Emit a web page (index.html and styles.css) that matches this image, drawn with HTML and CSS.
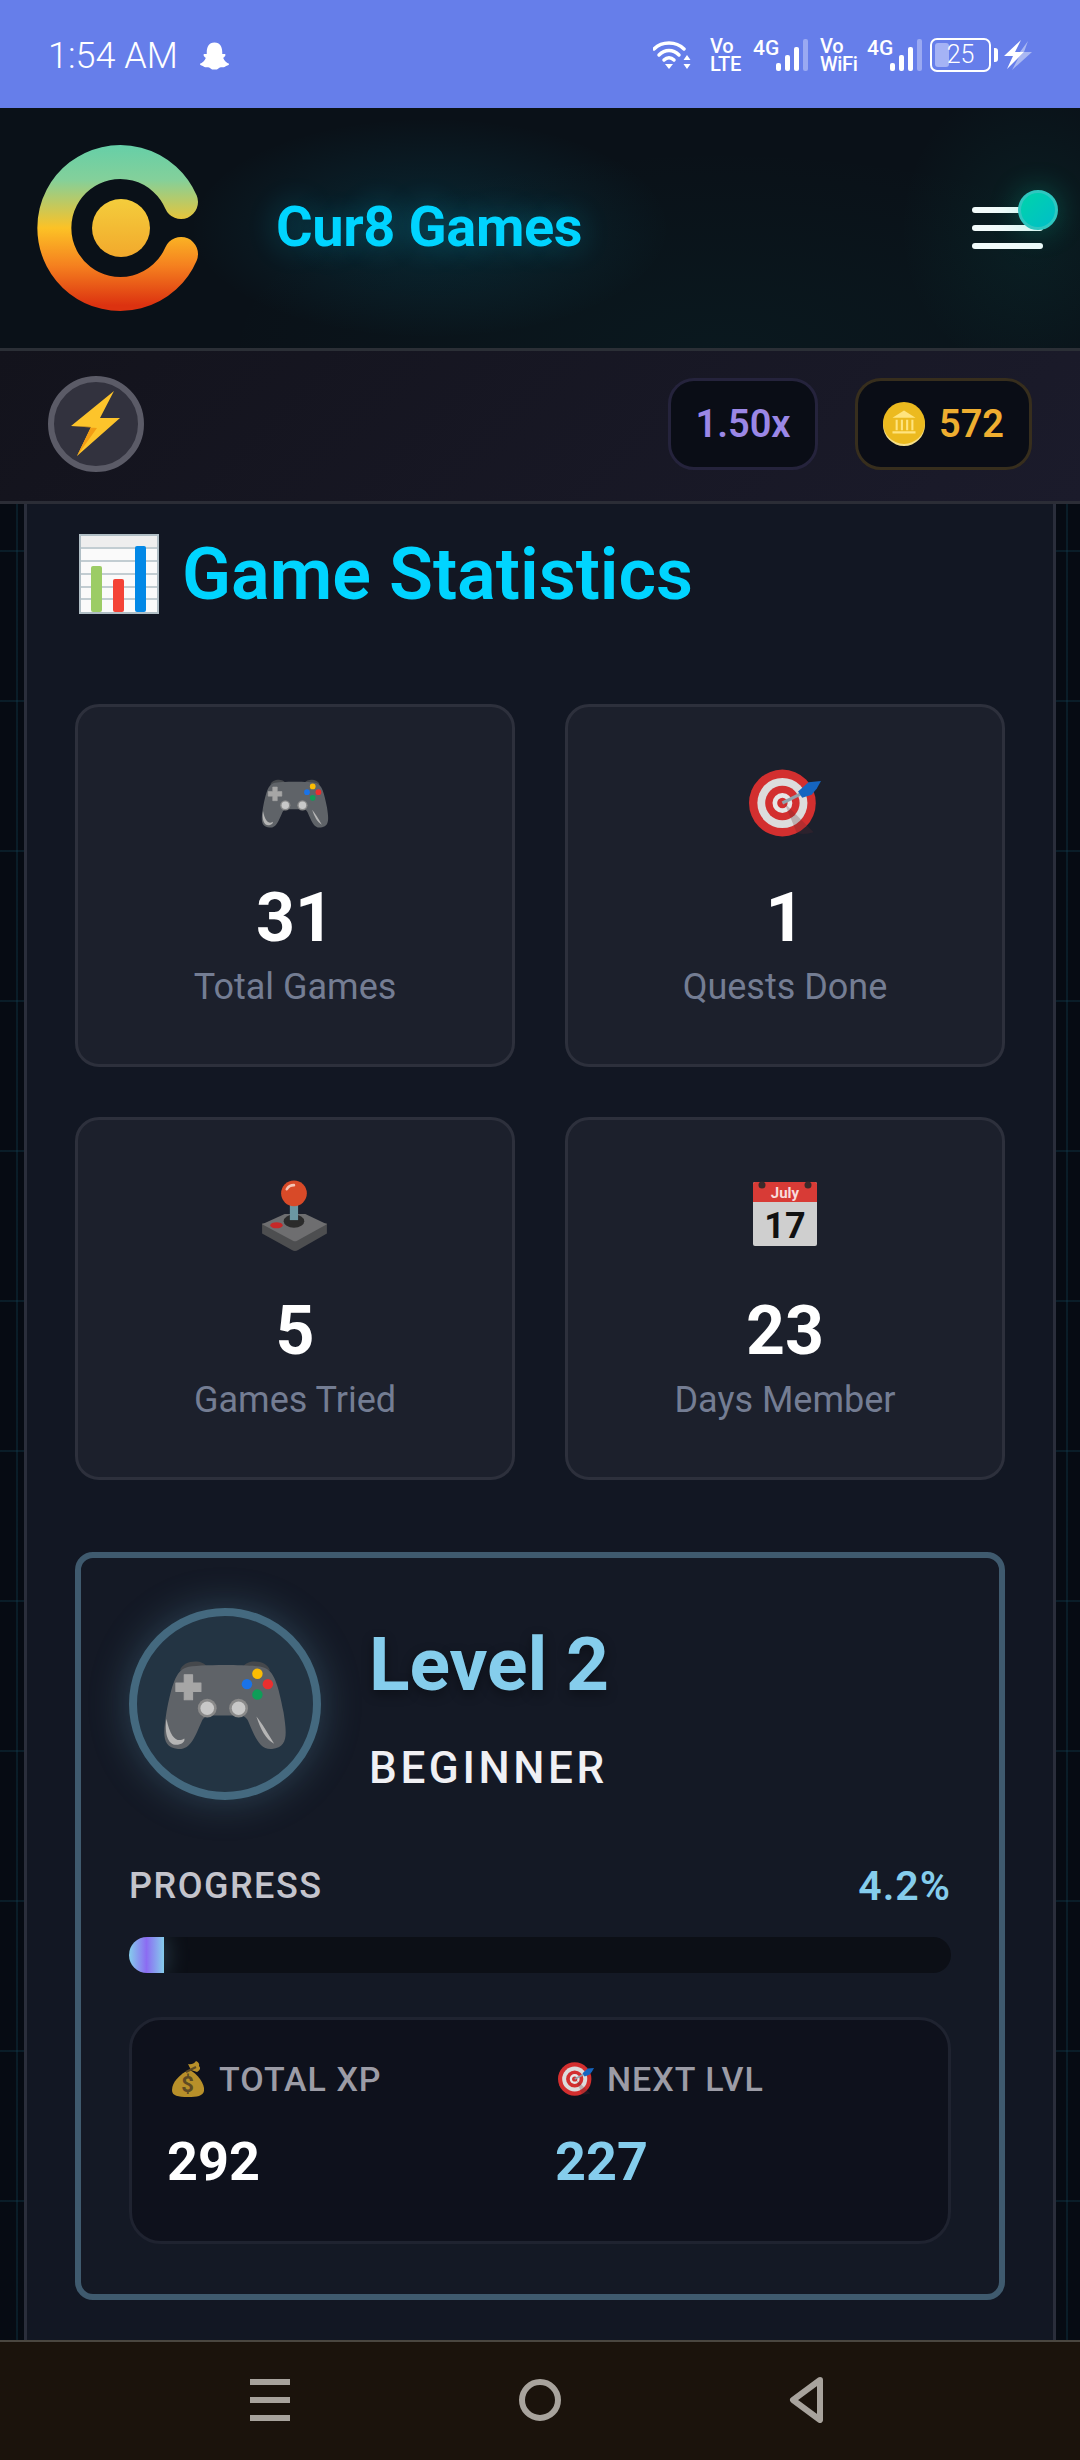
FILE: index.html
```html
<!DOCTYPE html>
<html lang="en">
<head>
    <meta charset="UTF-8">
    <meta name="viewport" content="width=device-width, initial-scale=1.0">
    <title>Cur8 Games - Game Statistics</title>
    <link rel="stylesheet" href="styles.css">
</head>
<body>

    <!-- Shared drawings for the emoji that show up more than once -->
    <svg class="sprite" aria-hidden="true">
        <symbol id="gamepad" viewBox="0 0 126 88">
            <path d="M20 12 C22 2 42 0 46 9 L80 9 C84 0 104 2 106 12 Z" fill="#45484c"/>
            <path d="M26 9 C36 6 90 6 100 9 C110 12 114 26 119 52 C122 72 124 85 108 87 C96 88 92 76 85 60 C83 56 80 55 76 55 L50 55 C46 55 43 56 41 60 C34 76 30 88 18 87 C2 85 4 72 7 52 C12 26 16 12 26 9 Z" fill="#5f6368"/>
            <path d="M24 16 h8 v8 h8 v8 h-8 v8 h-8 v-8 h-8 v-8 h8 Z" fill="#a6a6a6" stroke="#a6a6a6" stroke-width="1" stroke-linejoin="round"/>
            <circle cx="46" cy="48" r="9" fill="#8a8a8a"/>
            <circle cx="46" cy="48" r="6.500" fill="#c8c8c8"/>
            <circle cx="76" cy="48" r="9" fill="#8a8a8a"/>
            <circle cx="76" cy="48" r="6.500" fill="#c8c8c8"/>
            <circle cx="94" cy="15" r="5" fill="#fbbc04"/>
            <circle cx="84" cy="25" r="5" fill="#1a73e8"/>
            <circle cx="104" cy="25" r="5" fill="#ea2f2f"/>
            <circle cx="94" cy="35" r="5" fill="#0f9d58"/>
            <path d="M7 58 C5 72 8 84 18 83 C23 82 25 79 24 77 C18 81 11 78 7 58 Z" fill="#b5b5b5"/>
            <path d="M93 56 C98 62 104 72 110 82 C102 78 97 68 93 56 Z" fill="#b5b5b5"/>
        </symbol>
        <symbol id="target" viewBox="0 0 69 64">
            <circle cx="32" cy="32" r="32" fill="#d32f2f"/>
            <circle cx="32" cy="32" r="24" fill="#dcdcdc"/>
            <circle cx="32" cy="32" r="16.500" fill="#d32f2f"/>
            <circle cx="32" cy="32" r="9.500" fill="#e6e6e6"/>
            <circle cx="32" cy="32" r="5" fill="#d32f2f"/>
            <path d="M34 32 L62 60 A32 32 0 0 1 46 61 Z" fill="#5a2630" opacity="0.25"/>
            <path d="M32 32 L52 22" stroke="#8fa3ad" stroke-width="3"/>
            <path d="M47 21 L57 12 L69 11 L65 18 L60 24 L51 27 Z" fill="#1565c0"/>
        </symbol>
    </svg>

    <div class="app">
        <div class="status-bar">
            <div class="status-left">
                <span class="clock">1:54 AM</span>
                <svg class="ghost" viewBox="0 0 32 30">
                    <path d="M16 1 C22 1 24 6 24 11 L24 13 L27 13 C28 15 26 16 25 17 C26 20 29 22 31 23 C31 25 28 25 27 26 C25 27 23 26 21 27 C19 29 18 29 16 29 C14 29 13 29 11 27 C9 26 7 27 5 26 C4 25 1 25 1 23 C3 22 6 20 7 17 C6 16 4 15 5 13 L8 13 L8 11 C8 6 10 1 16 1 Z" fill="#fff"/>
                </svg>
            </div>
            <div class="status-right">
                <svg class="wifi" viewBox="0 0 38 30">
                    <path d="M1 9 C9 1 23 1 31 9" fill="none" stroke="#fff" stroke-width="3.500" stroke-linecap="round"/>
                    <path d="M6 15 C12 9 20 9 26 15" fill="none" stroke="#fff" stroke-width="3.500" stroke-linecap="round"/>
                    <path d="M11 20 C14 17 18 17 21 20" fill="none" stroke="#fff" stroke-width="3.500" stroke-linecap="round"/>
                    <path d="M12 24 h8 l-4 5 Z" fill="#fff"/>
                    <path d="M34 15 l3.500 5 h-7 Z M34 29 l3.500 -5 h-7 Z" fill="#fff"/>
                </svg>
                <span class="net-stack net-lte"><span>Vo</span><span>LTE</span></span>
                <span class="net-group">
                    <span class="net-four">4G</span>
                    <span class="bars">
                        <i class="bar bar-1"></i><i class="bar bar-2"></i><i class="bar bar-3"></i><i class="bar bar-4"></i>
                    </span>
                </span>
                <span class="net-stack net-wifi"><span>Vo</span><span>WiFi</span></span>
                <span class="net-group net-group-last">
                    <span class="net-four">4G</span>
                    <span class="bars">
                        <i class="bar bar-1"></i><i class="bar bar-2"></i><i class="bar bar-3"></i><i class="bar bar-4"></i>
                    </span>
                </span>
                <span class="battery"><i class="battery-fill"></i><span class="battery-num">25</span></span>
                <i class="battery-nub"></i>
                <svg class="charge" viewBox="0 0 28 30">
                    <path d="M24 1 L16 12 L28 12 L8 30 L15 17 L20 12 Z" fill="#aab8f2"/>
                    <path d="M17 0 L0 16 L9 16 L3 29 L20 12 L11 12 Z" fill="#fff"/>
                </svg>
            </div>
        </div>

        <header class="site-header">
            <svg class="logo" viewBox="0 0 166 172">
                <defs>
                    <linearGradient id="logoGrad" gradientUnits="userSpaceOnUse" x1="0" y1="0" x2="0" y2="172">
                        <stop offset="0" stop-color="#63cfa9"/>
                        <stop offset="0.22" stop-color="#84d09a"/>
                        <stop offset="0.5" stop-color="#fcc226"/>
                        <stop offset="0.72" stop-color="#f5801f"/>
                        <stop offset="0.95" stop-color="#dc3210"/>
                    </linearGradient>
                    <linearGradient id="dotGrad" x1="0" y1="0" x2="0" y2="1">
                        <stop offset="0" stop-color="#f4cd3c"/>
                        <stop offset="1" stop-color="#f2a92c"/>
                    </linearGradient>
                </defs>
                <path d="M144 60 A66 66 0 1 0 144 112" fill="none" stroke="url(#logoGrad)" stroke-width="34" stroke-linecap="round"/>
                <circle cx="84" cy="86" r="29" fill="url(#dotGrad)"/>
            </svg>
            <h1 class="brand">Cur8 Games</h1>
            <button class="menu-btn" aria-label="Menu">
                <i class="menu-line"></i>
                <i class="menu-line"></i>
                <i class="menu-line"></i>
                <i class="menu-dot"></i>
            </button>
        </header>

        <div class="sub-bar">
            <div class="bolt-btn">
                <svg class="bolt" viewBox="0 0 50 66">
                    <path d="M43 0 L0 35 L20 36 L6 65 L49 27 L29 27 Z" fill="#fdc42b"/>
                    <path d="M0 35 L20 36 L6 65 L26 37 Z" fill="#f29d14"/>
                </svg>
            </div>
            <div class="pills">
                <div class="pill pill-mult">1.50x</div>
                <div class="pill pill-coin">
                    <svg class="coin" viewBox="0 0 40 42">
                        <circle cx="20" cy="22" r="20" fill="#f7e08a"/>
                        <circle cx="20" cy="20" r="20" fill="#ecba1f"/>
                        <path d="M20 8 L31 15 L9 15 Z" fill="#ffe47e"/>
                        <path d="M12 17 h2 v10 h-2 Z M17 17 h2 v10 h-2 Z M22 17 h2 v10 h-2 Z M27 17 h2 v10 h-2 Z M9 28 h22 v2 h-22 Z" fill="#ffe47e"/>
                    </svg>
                    <span class="coin-num">572</span>
                </div>
            </div>
        </div>

        <main class="content">
            <section class="panel">
                <h2 class="panel-title">
                    <svg class="chart-icon" viewBox="0 0 80 80">
                        <rect width="80" height="80" fill="#b0bec5"/>
                        <rect x="2" y="2" width="76" height="76" fill="#fafafa"/>
                        <rect x="2" y="2" width="76" height="11" fill="#eeeeee"/>
                        <path d="M2 14 H78 M2 27 H78 M2 40 H78 M2 53 H78 M2 65 H78" stroke="#b0bec5" stroke-width="1.500"/>
                        <rect x="12" y="32" width="11" height="46" rx="2" fill="#9ccc65"/>
                        <rect x="34" y="45" width="11" height="33" rx="2" fill="#f44336"/>
                        <rect x="56" y="12" width="11" height="66" rx="2" fill="#0288e6"/>
                    </svg>
                    Game Statistics
                </h2>

                <div class="stat-grid">
                    <div class="stat-card">
                        <svg class="stat-icon"><use href="#gamepad"/></svg>
                        <div class="stat-num">31</div>
                        <div class="stat-label">Total Games</div>
                    </div>
                    <div class="stat-card">
                        <svg class="stat-icon"><use href="#target"/></svg>
                        <div class="stat-num">1</div>
                        <div class="stat-label">Quests Done</div>
                    </div>
                    <div class="stat-card">
                        <svg class="stat-icon" viewBox="0 0 64 70">
                            <path d="M0 42 L63 42 L63 52 L35 68 Q32 70 29 68 L0 52 Z" fill="#4d4e50"/>
                            <path d="M0 43 L22 33 H42 L63 43 L34 59 Q32 60 30 59 Z" fill="#6e6e70"/>
                            <ellipse cx="31" cy="40" rx="10" ry="6.500" fill="#2b2b2b"/>
                            <rect x="27" y="23" width="8" height="16" fill="#6b97a2"/>
                            <circle cx="31" cy="13" r="12.500" fill="#d84a28"/>
                            <path d="M24 9 Q26 5 31 5" stroke="#f4c4b4" stroke-width="2.500" fill="none" stroke-linecap="round"/>
                            <ellipse cx="14" cy="44" rx="6" ry="3" fill="#c62828"/>
                        </svg>
                        <div class="stat-num">5</div>
                        <div class="stat-label">Games Tried</div>
                    </div>
                    <div class="stat-card">
                        <svg class="stat-icon stat-icon-cal" viewBox="0 0 64 66" preserveAspectRatio="xMidYMin">
                            <rect y="2" width="64" height="64" rx="2" fill="#cfcfcf"/>
                            <path d="M0 22 V4 Q0 2 2 2 H62 Q64 2 64 4 V22 Z" fill="#d83b36"/>
                            <circle cx="9" cy="5" r="3.500" fill="#3a2a2a"/>
                            <circle cx="55" cy="5" r="3.500" fill="#3a2a2a"/>
                            <text class="cal-month" x="32" y="18">July</text>
                            <text class="cal-day" x="32" y="58">17</text>
                        </svg>
                        <div class="stat-num">23</div>
                        <div class="stat-label">Days Member</div>
                    </div>
                </div>

                <div class="level-card">
                    <div class="level-top">
                        <div class="avatar">
                            <svg class="avatar-pad"><use href="#gamepad"/></svg>
                        </div>
                        <div class="level-info">
                            <div class="level-name">Level 2</div>
                            <div class="level-rank">BEGINNER</div>
                        </div>
                    </div>

                    <div class="progress-row">
                        <span class="progress-label">PROGRESS</span>
                        <span class="progress-pct">4.2%</span>
                    </div>
                    <div class="progress-track">
                        <div class="progress-fill" style="width: 4.2%"></div>
                    </div>

                    <div class="xp-box">
                        <div class="xp-col">
                            <div class="xp-label">
                                <svg class="xp-icon" viewBox="0 0 34 36">
                                    <path d="M20 9 L17 3 Q22 4 25 0 Q29 2 28 5 Q31 8 26 11 Z" fill="#b8902a"/>
                                    <path d="M19 9 C26 13 34 22 33 30 C32 35 26 36 17 36 C7 36 1 35 1 29 C1 21 9 14 14 11 Z" fill="#b8902a"/>
                                    <path d="M15 11 L25 6" stroke="#5e4a24" stroke-width="2"/>
                                    <text class="bag-sign" x="17" y="31">$</text>
                                </svg>
                                TOTAL XP
                            </div>
                            <div class="xp-value">292</div>
                        </div>
                        <div class="xp-col">
                            <div class="xp-label">
                                <svg class="xp-icon"><use href="#target"/></svg>
                                NEXT LVL
                            </div>
                            <div class="xp-value xp-value-next">227</div>
                        </div>
                    </div>
                </div>
            </section>
        </main>

        <nav class="nav-bar">
            <span class="nav-menu"><i></i><i></i><i></i></span>
            <i class="nav-home"></i>
            <svg class="nav-back" viewBox="0 0 36 46">
                <path d="M31 3 L4 23 L31 43 Z" fill="none" stroke="#a8a39d" stroke-width="6" stroke-linejoin="round"/>
            </svg>
        </nav>
    </div>

</body>
</html>
```

FILE: styles.css
```css
* {
    box-sizing: border-box;
}
html, body {
    margin: 0;
    padding: 0;
}
body {
    width: 1080px;
    height: 2460px;
    overflow: hidden;
    font-family: Roboto, "Noto Sans", sans-serif;
    background-color: #060b13;
}
.sprite {
    display: none;
}
.app {
    display: flex;
    flex-direction: column;
    height: 2460px;
}

/* --- Phone status bar --- */
.status-bar {
    flex: 0 0 108px;
    display: flex;
    align-items: center;
    justify-content: space-between;
    padding: 1px 48px 0 48px;
    background-color: #667eea;
    color: #fff;
}
.status-left {
    display: flex;
    align-items: center;
    gap: 21px;
    padding-top: 2px;
}
.clock {
    font-size: 36px;
    font-weight: 300;
}
.ghost {
    width: 31px;
    height: 30px;
}
.status-right {
    display: flex;
    align-items: center;
}
.wifi {
    width: 38px;
    height: 30px;
    margin-right: 19px;
}
.net-stack {
    display: flex;
    flex-direction: column;
    font-size: 20px;
    line-height: 18px;
    font-weight: 500;
    letter-spacing: -0.3px;
}
.net-lte {
    width: 29px;
    margin-right: 14px;
}
.net-wifi {
    width: 36px;
    margin-right: 11px;
}
.net-group {
    display: flex;
    position: relative;
    width: 55px;
    height: 32px;
    margin-right: 12px;
}
.net-group-last {
    margin-right: 8px;
}
.net-four {
    font-size: 21px;
    line-height: 18px;
    font-weight: 500;
}
.bars {
    position: absolute;
    right: 0;
    bottom: 0;
    display: flex;
    align-items: flex-end;
    gap: 4px;
}
.bar {
    display: block;
    width: 5px;
    border-radius: 2px;
    background-color: #fff;
}
.bar-1 { height: 8px; }
.bar-2 { height: 16px; }
.bar-3 { height: 24px; }
.bar-4 { height: 32px; background-color: #9aa9f2; }
.battery {
    position: relative;
    display: flex;
    align-items: center;
    justify-content: center;
    width: 61px;
    height: 34px;
    border: 2.500px solid #fff;
    border-radius: 7px;
}
.battery-fill {
    position: absolute;
    left: 3px;
    top: 3px;
    bottom: 3px;
    width: 14px;
    border-radius: 3px;
    background-color: #a5b3f5;
}
.battery-num {
    position: relative;
    font-size: 25px;
    font-weight: 300;
}
.battery-nub {
    width: 4px;
    height: 14px;
    margin: 0 6px 0 3px;
    border-radius: 0 3px 3px 0;
    background-color: #fff;
}
.charge {
    width: 28px;
    height: 30px;
}

/* --- Site header --- */
.site-header {
    flex: 0 0 243px;
    display: flex;
    align-items: center;
    padding: 0 22px 0 37px;
    border-bottom: 3px solid #2b2f36;
    background-color: #0a1118;
    background-image:
        radial-gradient(ellipse 240px 110px at 430px 120px, rgba(0, 190, 230, 0.13), transparent),
        radial-gradient(ellipse 130px 150px at 1030px 120px, rgba(0, 200, 170, 0.07), transparent),
        radial-gradient(ellipse 500px 200px at 720px 240px, rgba(0, 160, 150, 0.05), transparent);
}
.logo {
    width: 166px;
    height: 172px;
    flex: none;
}
.brand {
    margin: 0 0 3px 73px;
    flex: 1;
    font-size: 56px;
    font-weight: 700;
    letter-spacing: -0.4px;
    color: #00d4ff;
    text-shadow: 0 0 30px rgba(0, 212, 255, 0.3);
}
.menu-btn {
    position: relative;
    display: flex;
    flex-direction: column;
    gap: 12px;
    width: 86px;
    padding: 0 15px 0 0;
    background: none;
    border: none;
}
.menu-line {
    display: block;
    width: 71px;
    height: 6px;
    border-radius: 3px;
    background-color: #f2fbfb;
}
.menu-dot {
    position: absolute;
    top: -17px;
    right: 0;
    width: 40px;
    height: 40px;
    border: 3px solid #2fc7c0;
    border-radius: 50%;
    background: linear-gradient(135deg, #00d4aa, #00bdc9);
    box-shadow: 0 0 30px rgba(0, 212, 170, 0.3);
}

/* --- Boost and coins bar --- */
.sub-bar {
    flex: 0 0 153px;
    display: flex;
    align-items: center;
    justify-content: space-between;
    padding: 0 48px 5px;
    border-bottom: 3px solid #2b2d36;
    background: linear-gradient(135deg, #13131c, #1b1b2b);
}
.bolt-btn {
    display: flex;
    align-items: center;
    justify-content: center;
    width: 96px;
    height: 96px;
    border: 6px solid #5b5b67;
    border-radius: 50%;
    background-color: #32323e;
}
.bolt {
    width: 50px;
    height: 66px;
}
.pills {
    display: flex;
    gap: 37px;
}
.pill {
    display: flex;
    align-items: center;
    justify-content: center;
    height: 92px;
    border-radius: 26px;
    background-color: #0a0d16;
    font-size: 38px;
    font-weight: 600;
}
.pill-mult {
    width: 150px;
    border: 3px solid #25233c;
    color: #9b87e6;
}
.pill-coin {
    width: 177px;
    gap: 14px;
    border: 3px solid #372e1d;
    color: #efae30;
}
.coin {
    width: 42px;
    height: 44px;
}

/* --- Main scroll area --- */
.content {
    flex: 1;
    min-height: 0;
    overflow: hidden;
    padding: 0 24px;
    background-color: #060b13;
    background-image:
        linear-gradient(rgba(20, 70, 90, 0.3) 2px, transparent 2px),
        linear-gradient(90deg, rgba(20, 70, 90, 0.3) 2px, transparent 2px);
    background-size: 150px 150px;
    background-position: 16px 46px;
}
.panel {
    height: 100%;
    padding: 29px 48px 0;
    border: solid #2a2e3b;
    border-width: 0 3px;
    background-color: #121723;
}
.panel-title {
    display: flex;
    align-items: center;
    gap: 23px;
    height: 82px;
    margin: 0 0 89px 4px;
    font-size: 72px;
    font-weight: 600;
    color: #00d4ff;
}
.chart-icon {
    width: 80px;
    height: 80px;
    flex: none;
}

/* --- Stat cards --- */
.stat-grid {
    display: grid;
    grid-template-columns: 440px 440px;
    gap: 50px;
}
.stat-card {
    display: flex;
    flex-direction: column;
    align-items: center;
    height: 363px;
    padding-top: 60px;
    border: 3px solid #2d303c;
    border-radius: 24px;
    background-color: #1c202c;
}
.stat-icon {
    width: 72px;
    height: 72px;
}
.stat-icon-cal {
    width: 64px;
}
.stat-num {
    margin-top: 39px;
    font-size: 68px;
    line-height: 80px;
    font-weight: 700;
    color: #fff;
}
.stat-label {
    margin-top: 7px;
    font-size: 36px;
    line-height: 44px;
    color: #747d93;
}
.cal-month {
    font-family: Roboto, sans-serif;
    font-size: 15px;
    font-weight: 700;
    fill: #f8dcdc;
    text-anchor: middle;
}
.cal-day {
    font-family: Roboto, sans-serif;
    font-size: 36px;
    font-weight: 700;
    fill: #111;
    text-anchor: middle;
}

/* --- Level card --- */
.level-card {
    height: 748px;
    margin-top: 72px;
    padding: 50px 48px 0;
    border: 6px solid #3f5a6e;
    border-radius: 18px;
    background-color: #141925;
}
.level-top {
    display: flex;
    gap: 48px;
}
.avatar {
    display: flex;
    align-items: center;
    justify-content: center;
    width: 192px;
    height: 192px;
    flex: none;
    border: 8px solid #44697f;
    border-radius: 50%;
    background-color: #233443;
    box-shadow: 0 0 40px rgba(125, 200, 235, 0.25);
}
.avatar-pad {
    width: 132px;
    height: 92px;
}
.level-info {
    padding-top: 12px;
}
.level-name {
    font-size: 75px;
    line-height: 88px;
    font-weight: 700;
    color: #85cdec;
    text-shadow: 0 4px 12px rgba(0, 0, 0, 0.4);
}
.level-rank {
    margin-top: 33px;
    font-size: 44px;
    line-height: 54px;
    font-weight: 500;
    letter-spacing: 3.600px;
    color: #f0f0f4;
}
.progress-row {
    display: flex;
    align-items: center;
    justify-content: space-between;
    height: 40px;
    margin-top: 66px;
}
.progress-label {
    font-size: 36px;
    font-weight: 500;
    letter-spacing: 1.500px;
    color: #c4c4cc;
}
.progress-pct {
    font-size: 41px;
    font-weight: 600;
    letter-spacing: 1px;
    color: #85cdec;
}
.progress-track {
    height: 36px;
    margin-top: 31px;
    overflow: hidden;
    border-radius: 18px;
    background-color: #0c0f16;
}
.progress-fill {
    height: 100%;
    background: linear-gradient(90deg, #85cdec, #8b6cf2 50%, #85cdec);
    box-shadow: 0 0 24px rgba(125, 200, 235, 0.3);
}
.xp-box {
    display: grid;
    grid-template-columns: 388px 1fr;
    height: 227px;
    margin-top: 44px;
    padding: 37px 35px 0;
    border: 3px solid #1f2330;
    border-radius: 32px;
    background-color: #0e111c;
}
.xp-label {
    display: flex;
    align-items: center;
    gap: 13px;
    height: 44px;
    padding-left: 3px;
    font-size: 34px;
    font-weight: 500;
    letter-spacing: 1px;
    color: #9c9ca6;
}
.xp-icon {
    width: 36px;
    height: 36px;
    flex: none;
}
.bag-sign {
    font-family: Roboto, sans-serif;
    font-size: 22px;
    font-weight: 700;
    fill: #5e4a24;
    text-anchor: middle;
}
.xp-value {
    margin-top: 29px;
    font-size: 54px;
    line-height: 64px;
    font-weight: 700;
    color: #fff;
}
.xp-value-next {
    color: #85cdec;
}

/* --- Phone nav bar --- */
.nav-bar {
    flex: 0 0 120px;
    display: flex;
    align-items: center;
    padding: 0 0 2px 250px;
    border-top: 2px solid #4a4640;
    background-color: #1b130c;
}
.nav-menu {
    display: flex;
    flex-direction: column;
    gap: 12px;
    width: 40px;
}
.nav-menu i {
    display: block;
    height: 6px;
    background-color: #a8a39d;
}
.nav-home {
    width: 42px;
    height: 42px;
    margin-left: 229px;
    border: 6px solid #a8a39d;
    border-radius: 50%;
}
.nav-back {
    width: 36px;
    height: 46px;
    margin-left: 228px;
}
```
